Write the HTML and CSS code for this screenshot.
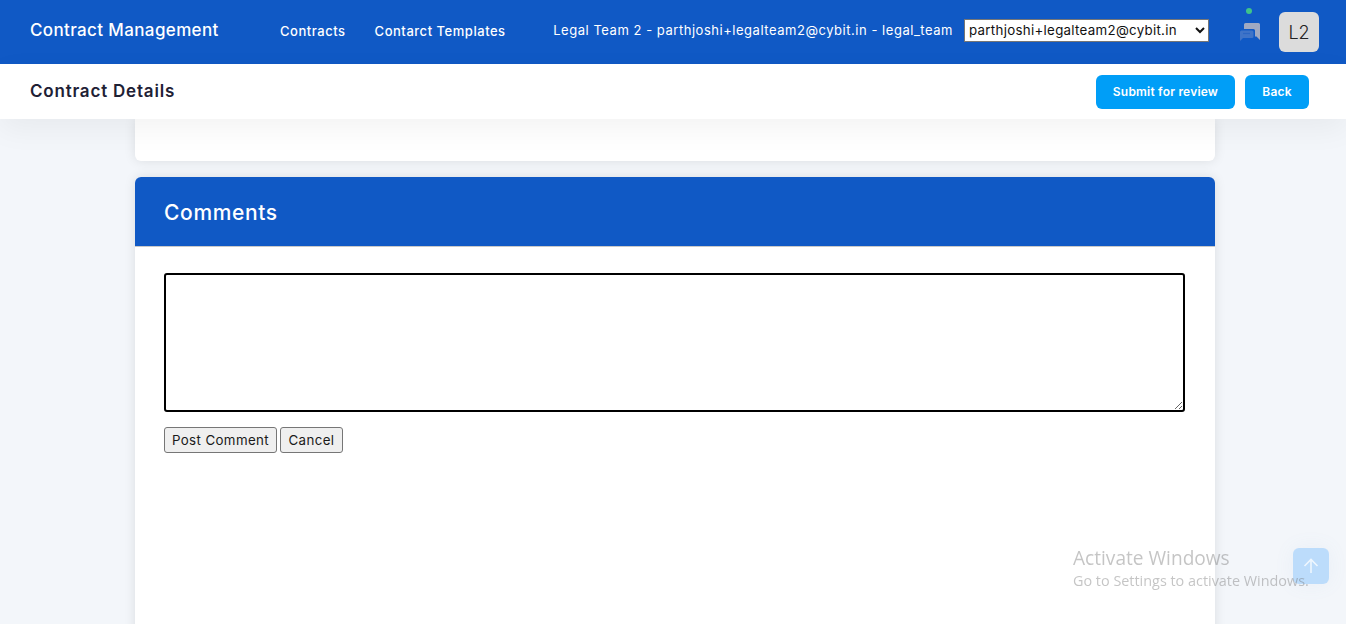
FILE: index.html
```html
<!DOCTYPE html>
<html lang="en">
<head>
<meta charset="utf-8">
<title>Contract Details</title>
<link rel="stylesheet" href="styles.css">
</head>
<body>
<div class="page">
  <header class="topbar">
    <div class="brand">Contract Management</div>
    <nav class="nav">
      <a class="nav-link">Contracts</a>
      <a class="nav-link">Contarct Templates</a>
    </nav>
    <div class="user-line">Legal Team 2 - parthjoshi+legalteam2@cybit.in - legal_team</div>
    <select class="user-select"><option>parthjoshi+legalteam2@cybit.in</option></select>
    <div class="chat-icon">
      <span class="chat-dot"></span>
      <svg width="22" height="22" viewBox="0 0 22 22">
        <path d="M5 3.5Q5 2 6.5 2H19.5Q21 2 21 3.5V19L17.5 15.5H16V9.5Q16 8 14.5 8H5Z" fill="#9fa9c2"/>
        <path d="M2.5 9.5H13Q14.5 9.5 14.5 11V15.5Q14.5 17 13 17H4L1 20V11Q1 9.5 2.5 9.5Z" fill="#3f74c8"/>
        <path d="M4 12.5H11" stroke="#2b66c4" stroke-width="1.2"/>
      </svg>
    </div>
    <div class="avatar">L2</div>
  </header>
  <div class="subbar">
    <h1 class="subtitle">Contract Details</h1>
    <div class="actions">
      <button class="btn-primary btn-submit">Submit for review</button>
      <button class="btn-primary btn-back">Back</button>
    </div>
  </div>
  <main class="content">
    <section class="card card-clipped"></section>
    <section class="card card-comments">
      <h2 class="card-head">Comments</h2>
      <div class="card-body">
        <textarea class="comment-box"></textarea>
        <div class="form-actions">
          <button class="btn-plain btn-post">Post Comment</button>
          <button class="btn-plain btn-cancel">Cancel</button>
        </div>
      </div>
    </section>
  </main>
</div>
<div class="to-top">
  <svg width="20" height="20" viewBox="0 0 20 20" fill="none" stroke="#fff" stroke-opacity=".75" stroke-width="1.6">
    <path d="M10 17V4M3.5 10L10 3.5L16.5 10"/>
  </svg>
</div>
<div class="watermark">
  <div class="wm-title">Activate Windows</div>
  <div class="wm-sub">Go to Settings to activate Windows.</div>
</div>
</body>
</html>
```
FILE: styles.css
```css
* { box-sizing: border-box; }
html, body { margin: 0; height: 640px; overflow: hidden; background: #fff; }
body { font-family: Inter, "Noto Sans", sans-serif; color: #1e2135; }
.page { height: 624px; display: flex; flex-direction: column; overflow: hidden; background: #f3f6fa; }

.topbar { flex: none; height: 64px; background: #1059c5; color: #fff; display: flex; align-items: center; padding: 0 27px 0 30px; }
.brand { width: 250px; font-size: 17px; font-weight: 500; letter-spacing: .37px; margin-top: -4px; }
.nav { display: flex; gap: 29px; }
.nav-link { font-size: 13px; font-weight: 500; letter-spacing: .53px; margin-top: -3px; }
.user-line { margin-left: auto; font-size: 13px; letter-spacing: .53px; margin-top: -4px; }
.user-select { width: 245px; height: 23px; margin: -4px 0 0 11px; font: 13.3px Inter, sans-serif; letter-spacing: .3px; background: #fff; color: #111; border: 1px solid #767676; padding: 0; }
.chat-icon { position: relative; width: 22px; height: 22px; margin: 0 18px 0 30px; }
.chat-dot { position: absolute; left: 7px; top: -13px; width: 6px; height: 6px; border-radius: 50%; background: #3fc48a; }
.chat-icon svg { display: block; }
.avatar { width: 40px; height: 40px; border-radius: 6px; background: #dcdcdc; color: #222; font-size: 18px; font-weight: 300; display: flex; align-items: center; justify-content: center; }

.subbar { flex: none; position: relative; z-index: 2; height: 55px; background: #fff; display: flex; align-items: center; justify-content: space-between; padding: 0 37px 0 30px; box-shadow: 0 10px 30px rgba(0,0,0,.05); }
.subtitle { margin: -2px 0 0; font-size: 17px; font-weight: 600; letter-spacing: .8px; color: #1e2135; }
.actions { display: flex; gap: 10px; }
.btn-primary { height: 34px; padding: 0; border: 0; border-radius: 6px; background: #009ef7; color: #fff; font: 600 12px Inter, sans-serif; letter-spacing: .2px; }
.btn-submit { width: 139px; }
.btn-back { width: 64px; }

.content { flex: 1; width: 1080px; margin-left: 135px; }
.card { background: #fff; border-radius: 6px; box-shadow: 0 0 12px rgba(0,0,0,.1); }
.card-clipped { height: 42px; border-radius: 0 0 6px 6px; }
.card-comments { margin-top: 16px; height: 600px; overflow: hidden; }
.card-head { margin: 0; height: 70px; background: #1059c5; border-bottom: 1px solid #c9c9c9; color: #fff; font-size: 21px; font-weight: 500; letter-spacing: .65px; padding: 2px 29px 0; display: flex; align-items: center; }
.card-body { padding: 26px 30px 0 29px; }
.comment-box { display: block; width: 100%; height: 139px; border: 2px solid #000; border-radius: 3px; background: #fff; }
.form-actions { display: flex; gap: 3px; margin-top: 15px; }
.btn-plain { height: 26px; padding: 0; background: #efefef; border: 1px solid #767676; border-radius: 3px; color: #1a1a1a; font: 13.3px Inter, sans-serif; letter-spacing: .4px; }
.btn-post { width: 113px; }
.btn-cancel { width: 63px; }

.watermark { position: fixed; left: 1073px; top: 546px; color: rgba(110,110,110,.4); font-family: "Open Sans", sans-serif; white-space: nowrap; }
.wm-title { font-size: 19.1px; line-height: 24px; }
.wm-sub { font-size: 14.4px; line-height: 20px; margin-top: 1px; }
.to-top { position: fixed; left: 1293px; top: 548px; width: 36px; height: 36px; border-radius: 6px; background: #bcdcfb; display: flex; align-items: center; justify-content: center; box-shadow: 0 0 20px rgba(120,150,200,.08); }
```
